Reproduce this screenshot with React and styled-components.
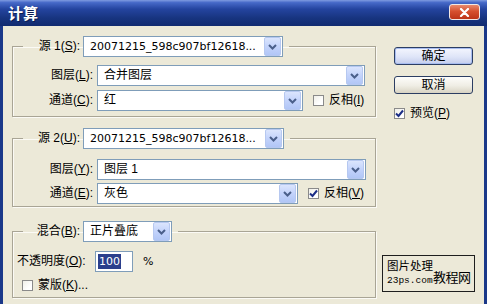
import React from 'react'
import styled, { createGlobalStyle } from 'styled-components'

const GlobalStyle = createGlobalStyle`
  html, body {
    margin: 0;
    padding: 0;
  }
  body {
    width: 487px;
    height: 304px;
    overflow: hidden;
    background: #ece9d8;
    color: #000;
    font-family: "Liberation Sans", "Noto Sans CJK SC", sans-serif;
    font-size: 12px;
  }
`

function Chevron() {
  return (
    <svg width="9" height="6" viewBox="0 0 9 6">
      <polyline points="1,1 4.5,4.5 8,1" fill="none" stroke="#4a5f8a" strokeWidth="2" />
    </svg>
  )
}

function Combo({ w, latin, children }) {
  return (
    <ComboBox $w={w}>
      <ComboText $latin={latin}>{children}</ComboText>
      <ArrowButton><Chevron /></ArrowButton>
    </ComboBox>
  )
}

function Check({ checked, children }) {
  return (
    <CheckRow>
      <CheckBox>
        {checked && (
          <svg width="9" height="9" viewBox="0 0 9 9">
            <polyline points="1,4.5 3.5,7 8,1.5" fill="none" stroke="#1b2d86" strokeWidth="2" />
          </svg>
        )}
      </CheckBox>
      <span>{children}</span>
    </CheckRow>
  )
}

function App() {
  return (
    <Window>
      <GlobalStyle />
      <TitleBar>
        <Title>计算</Title>
        <CloseButton>
          <svg width="11" height="9" viewBox="0 0 11 9">
            <path d="M2 1 L9 8 M9 1 L2 8" stroke="#fff" strokeWidth="2.2" strokeLinecap="round" />
          </svg>
        </CloseButton>
      </TitleBar>

      <Body>
        <GroupColumn>
          <Group $top={0} $pt={8} $pb={5}>
            <Legend>
              <LegendLabel>源 1(<u>S</u>):</LegendLabel>
              <Combo w={200} latin>20071215_598c907bf12618...</Combo>
            </Legend>
            <Row>
              <RowLabel>图层(<u>L</u>):</RowLabel>
              <Combo w={268}>合并图层</Combo>
            </Row>
            <Row $gap={4}>
              <RowLabel>通道(<u>C</u>):</RowLabel>
              <Combo w={206}>红</Combo>
              <CheckSlot $ml={10}>
                <Check>反相(<u>I</u>)</Check>
              </CheckSlot>
            </Row>
          </Group>

          <Group $top={11} $pt={10} $pb={2}>
            <Legend>
              <LegendLabel>源 2(<u>U</u>):</LegendLabel>
              <Combo w={201} latin>20071215_598c907bf12618...</Combo>
            </Legend>
            <Row>
              <RowLabel>图层(<u>Y</u>):</RowLabel>
              <Combo w={269}>图层 1</Combo>
            </Row>
            <Row $gap={3}>
              <RowLabel>通道(<u>E</u>):</RowLabel>
              <Combo w={201}>灰色</Combo>
              <CheckSlot $ml={10}>
                <Check checked>反相(<u>V</u>)</Check>
              </CheckSlot>
            </Row>
          </Group>

          <Group $top={14} $pt={9} $pb={3}>
            <Legend>
              <LegendLabel>混合(<u>B</u>):</LegendLabel>
              <Combo w={89}>正片叠底</Combo>
            </Legend>
            <Row>
              <OpacityLabel>不透明度(<u>O</u>):</OpacityLabel>
              <NumberField>
                <Selected>100</Selected>
              </NumberField>
              <Unit>%</Unit>
            </Row>
            <Row $gap={4} $h={18}>
              <CheckSlot $ml={9}>
                <Check>蒙版(<u>K</u>)...</Check>
              </CheckSlot>
            </Row>
          </Group>
        </GroupColumn>

        <SideColumn>
          <Button $primary>确定</Button>
          <Button $gap={11}>取消</Button>
          <PreviewSlot>
            <Check checked>预览(<u>P</u>)</Check>
          </PreviewSlot>
          <Watermark>
            <MarkLeft>
              <MarkTop>图片处理</MarkTop>
              <MarkUrl>23ps.com</MarkUrl>
            </MarkLeft>
            <MarkBig>教程网</MarkBig>
          </Watermark>
        </SideColumn>
      </Body>
    </Window>
  )
}

export default App

const Window = styled.div`
  width: 487px;
  height: 304px;
  display: flex;
  flex-direction: column;
  overflow: hidden;
`

const TitleBar = styled.div`
  flex: none;
  height: 26px;
  display: flex;
  align-items: flex-start;
  justify-content: space-between;
  padding: 0 7px 0 8px;
  background: linear-gradient(
    to bottom,
    #7f9be0 0%,
    #4669c8 10%,
    #24449f 35%,
    #17347f 70%,
    #112b70 100%
  );
`

const Title = styled.div`
  margin-top: 3px;
  color: #fff;
  font-family: "Noto Sans CJK SC", sans-serif;
  font-size: 15px;
  font-weight: 700;
  line-height: 20px;
  text-shadow: 1px 1px 0 #0b1d52;
`

const CloseButton = styled.div`
  margin-top: 4px;
  width: 29px;
  height: 14px;
  display: flex;
  align-items: center;
  justify-content: center;
  border: 1px solid #f2e8e4;
  border-radius: 3px;
  background: linear-gradient(to bottom, #e98a6e 0%, #d6502f 45%, #bd3418 100%);
`

const Body = styled.div`
  flex: 1;
  display: flex;
  background: #ece9d8;
  border-left: 3px solid #1a3889;
  border-right: 3px solid #1a3889;
  padding: 10px 0 6px 9px;
`

const GroupColumn = styled.div`
  width: 364px;
  flex: none;
  display: flex;
  flex-direction: column;
`

const Group = styled.fieldset`
  margin: ${p => p.$top}px 0 0 0;
  padding: ${p => p.$pt}px 0 ${p => p.$pb}px 0;
  min-width: 0;
  border: 1px solid #a9a595;
  box-shadow: inset 1px 1px 0 #fbfaf5, 1px 1px 0 #fbfaf5;
`

const Legend = styled.legend`
  margin-left: 10px;
  padding: 0 6px 0 0;
  display: flex;
  align-items: center;
`

const LegendLabel = styled.span`
  width: 57px;
  margin-right: 3px;
  text-align: right;
  line-height: 15px;
  white-space: nowrap;
`

const Row = styled.div`
  display: flex;
  align-items: center;
  height: ${p => p.$h || 21}px;
  margin-top: ${p => p.$gap || 0}px;
`

const RowLabel = styled.span`
  width: 80px;
  margin-right: 4px;
  text-align: right;
  line-height: 15px;
  white-space: nowrap;
`

const ComboBox = styled.div`
  width: ${p => p.$w}px;
  height: 21px;
  box-sizing: border-box;
  flex: none;
  display: flex;
  align-items: center;
  background: #fff;
  border: 1px solid #7f9db9;
`

const ComboText = styled.span`
  flex: 1;
  padding-left: 6px;
  overflow: hidden;
  white-space: nowrap;
  font-family: ${p => (p.$latin ? '"DejaVu Sans", sans-serif' : '"Liberation Sans", "Noto Sans CJK SC", sans-serif')};
  font-size: ${p => (p.$latin ? 11 : 12)}px;
  line-height: 15px;
`

const ArrowButton = styled.div`
  width: 15px;
  height: 17px;
  margin-right: 1px;
  flex: none;
  display: flex;
  align-items: center;
  justify-content: center;
  border: 1px solid #b6c8f0;
  border-radius: 2px;
  background: linear-gradient(to bottom, #dbe5fd 0%, #c3d3fb 50%, #b1c6f6 100%);
`

const CheckSlot = styled.div`
  margin-left: ${p => p.$ml}px;
`

const CheckRow = styled.label`
  display: flex;
  align-items: center;
  gap: 5px;
  line-height: 15px;
  white-space: nowrap;
`

const CheckBox = styled.span`
  width: 11px;
  height: 11px;
  box-sizing: border-box;
  display: flex;
  align-items: center;
  justify-content: center;
  border: 1px solid #8a8a8a;
  background: linear-gradient(135deg, #f0efe8 0%, #ffffff 70%);
`

const OpacityLabel = styled.span`
  width: 82px;
  padding-left: 4px;
  box-sizing: border-box;
  line-height: 15px;
  white-space: nowrap;
`

const NumberField = styled.div`
  width: 38px;
  height: 21px;
  box-sizing: border-box;
  display: flex;
  align-items: center;
  padding-left: 2px;
  background: #fff;
  border: 1px solid #7f9db9;
`

const Selected = styled.span`
  background: #2b3f8c;
  color: #fff;
  font-family: "DejaVu Sans", sans-serif;
  font-size: 11px;
  line-height: 15px;
  padding: 0 1px;
`

const Unit = styled.span`
  margin-left: 10px;
  font-family: "DejaVu Sans", sans-serif;
  font-size: 11px;
`

const SideColumn = styled.div`
  flex: 1;
  display: flex;
  flex-direction: column;
  padding-top: 11px;
`

const Button = styled.div`
  width: 79px;
  height: 18px;
  box-sizing: border-box;
  margin: ${p => p.$gap || 0}px 0 0 18px;
  display: flex;
  align-items: center;
  justify-content: center;
  border: 1px solid #2c3e63;
  border-radius: 3px;
  line-height: 15px;
  background: ${p =>
    p.$primary
      ? 'linear-gradient(to bottom, #f4f6fe 0%, #dfe5f8 55%, #c4cdec 100%)'
      : 'linear-gradient(to bottom, #fdfdfb 0%, #efede4 55%, #d8d3c3 100%)'};
  box-shadow: ${p => (p.$primary ? 'inset 0 0 0 1px #a8bdf0' : 'none')};
`

const PreviewSlot = styled.div`
  margin: 12px 0 0 18px;
`

const Watermark = styled.div`
  margin: auto 0 6px 6px;
  width: 93px;
  height: 37px;
  box-sizing: border-box;
  display: flex;
  align-items: flex-end;
  padding: 2px 1px 3px 4px;
  border: 1px solid #1e1e1e;
  white-space: nowrap;
`

const MarkLeft = styled.div`
  flex: none;
  display: flex;
  flex-direction: column;
`

const MarkTop = styled.span`
  font-size: 11.5px;
  line-height: 15px;
`

const MarkUrl = styled.span`
  font-family: "Liberation Mono", monospace;
  font-size: 9.5px;
  line-height: 14px;
`

const MarkBig = styled.span`
  flex: none;
  font-size: 13px;
  line-height: 20px;
  letter-spacing: -0.5px;
`
